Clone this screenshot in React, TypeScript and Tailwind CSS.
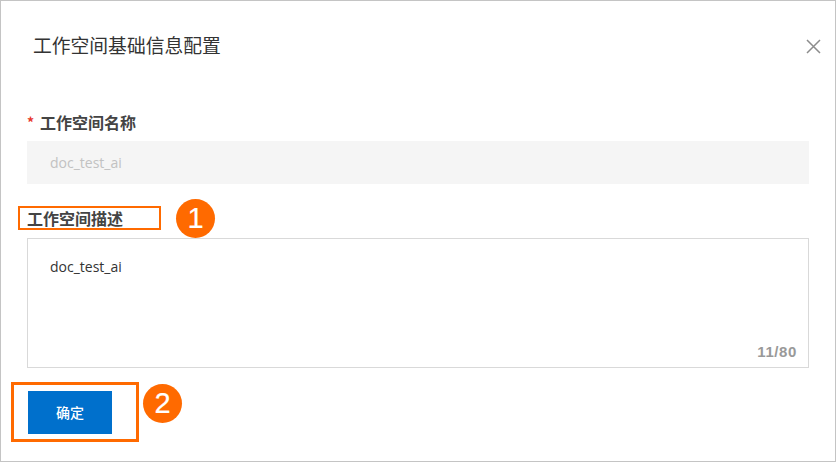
import React from "react";

function Badge({ n }: { n: number }) {
  return (
    <span className="flex h-[39px] w-[39px] items-center justify-center rounded-full bg-[#ff6a00] text-[29px] leading-none text-white [font-family:'Liberation_Sans',Arial,sans-serif] [-webkit-text-stroke:0.2px_white]">
      {n}
    </span>
  );
}

export default function App() {
  return (
    <div className="h-[462px] w-[837px] bg-white [font-family:'Noto_Sans_CJK_SC','Liberation_Sans',sans-serif]">
      <div className="flex h-[462px] w-[836px] flex-col border border-[#c4c4c4]">
        <div className="flex h-[89px] items-center justify-between pl-[32px] pr-[10px]">
          <h2 className="text-[18.8px] font-normal text-[#333]">工作空间基础信息配置</h2>
          <button className="mt-[2px] flex h-6 w-6 items-center justify-center text-[#8c8c8c]">
            <svg width="15" height="15" viewBox="0 0 15 15" fill="none" stroke="currentColor" strokeWidth="1.5">
              <path d="M1 1L14 14M14 1L1 14" />
            </svg>
          </button>
        </div>

        <div className="px-[26px]">
          <div className="mt-[20px] flex h-[24px] items-center text-[16px] font-bold text-[#444]">
            <span className="mr-[6px] text-[14px] text-[#e8372c]">*</span>
            工作空间名称
          </div>
          <div className="mt-[7px] flex h-[43px] w-[782px] items-center bg-[#f5f5f5] pl-[23px] text-[14px] text-[#c2c2c2] [font-family:'Open_Sans',sans-serif]">
            doc_test_ai
          </div>

          <div className="mt-[14px] flex h-[40px] items-center">
            <div className="ml-[-9px] flex h-[24px] w-[143px] items-center border-2 border-[#ff6a00] pl-[7px] text-[16px] font-bold text-[#444]">
              工作空间描述
            </div>
            <div className="ml-[15px]">
              <Badge n={1} />
            </div>
          </div>

          <div className="relative h-[130px] w-[782px] border border-[#d9d9d9] pl-[22px] pt-[17px] text-[14px] text-[#333] [font-family:'Open_Sans',sans-serif]">
            doc_test_ai
            <span className="absolute bottom-[4px] right-[11px] text-[15px] font-bold tracking-[0.6px] text-[#999] [font-family:'Liberation_Sans',Arial,sans-serif]">
              11/80
            </span>
          </div>

          <div className="mt-[14px] flex items-start">
            <div className="ml-[-16px] h-[60px] w-[128px] border-[3px] border-[#ff6a00] pl-[14px] pt-[6px]">
              <button className="flex h-[43px] w-[84px] items-center justify-center bg-[#0070cc] text-[14px] font-medium text-white">
                确定
              </button>
            </div>
            <div className="ml-[4px] mt-[2px]">
              <Badge n={2} />
            </div>
          </div>
        </div>
      </div>
    </div>
  );
}
